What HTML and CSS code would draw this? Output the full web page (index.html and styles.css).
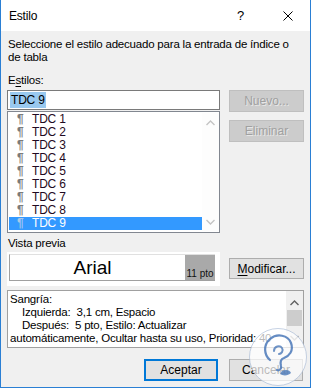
FILE: index.html
```html
<!DOCTYPE html>
<html lang="es">
<head>
    <meta charset="UTF-8">
    <meta name="viewport" content="width=device-width, initial-scale=1.0">
    <link rel="stylesheet" href="styles.css">
</head>
<body>
    <div class="window">
        <div class="titlebar">
            <span class="title">Estilo</span>
            <span class="help">?</span>
            <svg class="close" width="10" height="10" viewBox="0 0 10 10">
                <path d="M0.5 0.5 L9.5 9.5 M9.5 0.5 L0.5 9.5" stroke="#000" stroke-width="1" fill="none"/>
            </svg>
        </div>

        <div class="content">
            <p class="intro">Seleccione el estilo adecuado para la entrada de índice o de tabla</p>

            <div class="label">E<u>s</u>tilos:</div>
            <div class="styles-row">
                <div class="styles-col">
                    <div class="edit"><span class="selected-text">TDC 9</span></div>
                    <div class="list">
                        <ul class="items">
                            <li><span class="pilcrow">¶</span>TDC 1</li>
                            <li><span class="pilcrow">¶</span>TDC 2</li>
                            <li><span class="pilcrow">¶</span>TDC 3</li>
                            <li><span class="pilcrow">¶</span>TDC 4</li>
                            <li><span class="pilcrow">¶</span>TDC 5</li>
                            <li><span class="pilcrow">¶</span>TDC 6</li>
                            <li><span class="pilcrow">¶</span>TDC 7</li>
                            <li><span class="pilcrow">¶</span>TDC 8</li>
                            <li class="active"><span class="pilcrow">¶</span>TDC 9</li>
                        </ul>
                        <div class="vscroll">
                            <svg class="arrow" width="9" height="6" viewBox="0 0 9 6"><path d="M0.5 5 L4.5 1 L8.5 5" stroke="#c4c4c4" stroke-width="1.4" fill="none"/></svg>
                            <svg class="arrow" width="9" height="6" viewBox="0 0 9 6"><path d="M0.5 1 L4.5 5 L8.5 1" stroke="#c4c4c4" stroke-width="1.4" fill="none"/></svg>
                        </div>
                    </div>
                </div>
                <div class="side-buttons">
                    <button class="btn" disabled>Nuevo...</button>
                    <button class="btn" disabled>Eliminar</button>
                </div>
            </div>

            <div class="label label-preview">Vista previa</div>
            <div class="preview-row">
                <div class="preview-frame">
                    <div class="preview">
                        <span class="sample">Arial</span>
                        <span class="size">11 pto</span>
                    </div>
                </div>
                <button class="btn"><u>M</u>odificar...</button>
            </div>

            <div class="desc">
                <div class="desc-text">
                    <div>Sangría:</div>
                    <div class="indent">Izquierda:&nbsp; 3,1 cm, Espacio</div>
                    <div class="indent">Después:&nbsp; 5 pto, Estilo: Actualizar</div>
                    <div>automáticamente, Ocultar hasta su uso, Prioridad: 40</div>
                </div>
                <div class="desc-scroll">
                    <svg class="arrow" width="9" height="6" viewBox="0 0 9 6"><path d="M0.5 5 L4.5 1 L8.5 5" stroke="#606060" stroke-width="1.4" fill="none"/></svg>
                    <div class="thumb"></div>
                    <svg class="arrow" width="9" height="6" viewBox="0 0 9 6"><path d="M0.5 1 L4.5 5 L8.5 1" stroke="#a0a0a0" stroke-width="1.4" fill="none"/></svg>
                </div>
            </div>

            <div class="footer">
                <button class="btn btn-default">Aceptar</button>
                <button class="btn">Cancelar</button>
            </div>
        </div>

        <svg class="watermark" width="60" height="60" viewBox="0 0 60 60">
            <circle cx="30" cy="30" r="28.5" fill="rgba(255,255,255,0.72)" stroke="rgba(160,180,210,0.6)" stroke-width="1"/>
            <path d="M22 33 C16 28 15 18 22 12 C29 6 40 8 43 16 C46 24 41 29 36 31 C33 32 32 35 33 39 C34 42 31 44 29 43"
                  fill="none" stroke="#4a78b8" stroke-width="2.2" stroke-linecap="round" opacity="0.85"/>
            <path d="M26 24 C26 19 32 18 34 21 C36 24 33 27 31 27" fill="none" stroke="#4a78b8" stroke-width="2" stroke-linecap="round" opacity="0.8"/>
            <path d="M34 44 C38 42 42 43 43 46 C40 49 35 49 32 47" fill="rgba(74,120,184,0.8)" stroke="none"/>
        </svg>
    </div>
</body>
</html>
```

FILE: styles.css
```css
* {
    margin: 0;
    padding: 0;
    box-sizing: border-box;
}

body {
    width: 311px;
    height: 388px;
    font-family: "Liberation Sans", Arial, sans-serif;
    font-size: 11.5px;
    letter-spacing: -0.2px;
    color: #000;
    background-color: #fff;
    overflow: hidden;
}

.window {
    position: relative;
    width: 311px;
    height: 388px;
    border: 1px solid #2a7fd4;
    border-top: none;
    background-color: #f0f0f0;
    display: flex;
    flex-direction: column;
}

.titlebar {
    height: 31px;
    background-color: #fff;
    display: flex;
    align-items: center;
    padding-left: 8px;
}

.title {
    flex: 1;
    font-size: 12px;
}

.help {
    font-size: 13px;
    margin-right: 39px;
}

.close {
    margin-right: 17px;
}

.content {
    padding: 7px 6px 0 6px;
    display: flex;
    flex-direction: column;
}

.intro {
    line-height: 13px;
    padding-left: 1px;
}

.label {
    line-height: 13px;
    margin-top: 10px;
    padding-left: 1px;
}

.label u {
    text-decoration-thickness: 1px;
    text-underline-offset: 2px;
}

.styles-row {
    display: flex;
    margin-top: 3px;
}

.styles-col {
    width: 213px;
}

.edit {
    height: 20px;
    border: 1px solid #7a7a7a;
    background-color: #fff;
    padding: 1px 2px;
    line-height: 16px;
    font-size: 12px;
}

.selected-text {
    background-color: #99c9ef;
    display: inline-block;
    padding: 0 1px;
}

.list {
    height: 122px;
    margin-top: 1px;
    border: 1px solid #828790;
    background-color: #fff;
    display: flex;
    padding: 1px 0 1px 1px;
}

.items {
    list-style: none;
    flex: 1;
}

.items li {
    height: 13px;
    line-height: 13px;
    font-size: 12px;
    color: #1f0a22;
    padding-left: 8px;
}

.items li.active {
    background-color: #3399ff;
    color: #fff;
}

.pilcrow {
    display: inline-block;
    width: 15px;
    color: #7b7b7b;
    font-weight: bold;
}

.items li.active .pilcrow {
    color: #a8c8ea;
}

.vscroll {
    width: 17px;
    display: flex;
    flex-direction: column;
    justify-content: space-between;
    align-items: center;
    padding: 7px 0 6px 0;
    background-color: #fdfdfd;
}

.side-buttons {
    display: flex;
    flex-direction: column;
    gap: 8px;
    margin-left: 9px;
}

.btn {
    width: 75px;
    height: 22px;
    font-family: "Liberation Sans", Arial, sans-serif;
    font-size: 12px;
    color: #000;
    background-color: #e1e1e1;
    border: 1px solid #adadad;
}

.btn:disabled {
    background-color: #cccccc;
    border-color: #bfbfbf;
    color: #a0a0a0;
    text-shadow: 1px 1px 0 rgba(255, 255, 255, 0.55);
}

.btn u {
    text-underline-offset: 2px;
}

.btn-default {
    border: 2px solid #0078d7;
}

.label-preview {
    margin-top: 4px;
}

.preview-row {
    display: flex;
    align-items: flex-start;
    margin-top: 2px;
}

.preview-frame {
    width: 213px;
    height: 34px;
    background-color: #fff;
    padding: 2px 5px 5px 2px;
}

.preview {
    height: 27px;
    border-left: 1px solid #a0a0a0;
    border-bottom: 1px solid #a0a0a0;
    border-top: 1px solid #e0e0e0;
    display: flex;
}

.sample {
    flex: 1;
    font-size: 19px;
    letter-spacing: 0;
    line-height: 26px;
    text-align: center;
    padding-right: 10px;
}

.size {
    width: 30px;
    background-color: #a9a9a9;
    font-size: 10px;
    letter-spacing: 0;
    line-height: 11px;
    display: flex;
    align-items: flex-end;
    justify-content: center;
    padding-bottom: 1px;
    color: #111;
}

.preview-row .btn {
    margin-left: 9px;
    margin-top: 6px;
    height: 21px;
}

.desc {
    margin-top: 4px;
    height: 58px;
    width: 297px;
    border: 1px solid #a0a0a0;
    background-color: #fff;
    display: flex;
}

.desc-text {
    flex: 1;
    padding: 2px 0 0 2px;
    line-height: 13px;
    white-space: nowrap;
    overflow: hidden;
}

.indent {
    padding-left: 12px;
}

.desc-scroll {
    width: 17px;
    background-color: #f0f0f0;
    display: flex;
    flex-direction: column;
    align-items: center;
    padding: 9px 0 6px 0;
}

.thumb {
    width: 15px;
    height: 16px;
    background-color: #cdcdcd;
    margin: 4px 0 9px 0;
}

.footer {
    display: flex;
    justify-content: flex-end;
    gap: 11px;
    margin-top: 11px;
    padding-right: 1px;
}

.footer .btn {
    width: 74px;
}

.watermark {
    position: absolute;
    left: 247px;
    top: 327px;
}
```
